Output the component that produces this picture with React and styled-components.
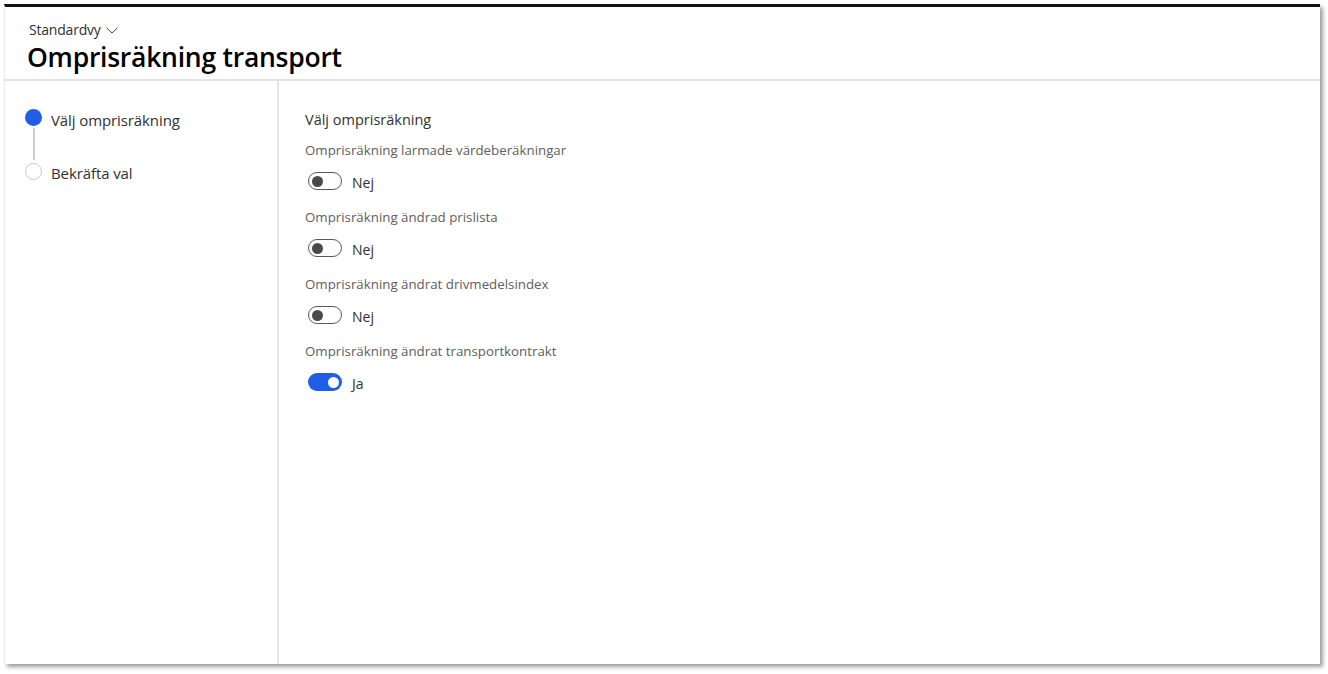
import React from 'react';
import styled, { createGlobalStyle } from 'styled-components';

const GlobalStyle = createGlobalStyle`
    html, body {
        margin: 0;
        padding: 0;
        background: #ffffff;
    }

    body {
        font-family: "Open Sans", "Noto Sans", sans-serif;
        color: #323130;
    }
`;

const Page = styled.div`
    width: 1328px;
    height: 674px;
    padding: 4px 0 0 4px;
    box-sizing: border-box;
`;

const Frame = styled.div`
    width: 1316px;
    height: 660px;
    box-sizing: border-box;
    display: flex;
    flex-direction: column;
    background: #ffffff;
    border-top: 3px solid #111111;
    border-left: 1px solid #ececec;
    box-shadow: 3px 3px 4px rgba(0, 0, 0, 0.38);
`;

const Header = styled.header`
    height: 74px;
    box-sizing: border-box;
    padding: 15px 0 0 22px;
    border-bottom: 2px solid #e3e3e3;
`;

const ViewPicker = styled.div`
    display: flex;
    align-items: center;
    gap: 5px;
    font-size: 14px;
    color: #323130;
    line-height: 16px;
    padding-left: 2px;
    letter-spacing: -0.2px;
`;

const Title = styled.h1`
    margin: 3px 0 0;
    font-size: 26.5px;
    font-weight: 600;
    line-height: 32px;
    color: #000000;
    letter-spacing: -0.25px;
`;

const Body = styled.div`
    flex: 1;
    display: flex;
`;

const Sidebar = styled.nav`
    width: 274px;
    border-right: 2px solid #e6e6e6;
    padding: 27px 0 0 20px;
    box-sizing: border-box;
`;

const Step = styled.div`
    display: flex;
    align-items: center;
    gap: 9px;
    height: 18px;
    font-size: 15px;
    color: #323130;
`;

const StepText = styled.span`
    padding-top: ${p => (p.$first ? '5px' : '3px')};
    letter-spacing: -0.1px;
`;

const Dot = styled.span`
    width: 17px;
    height: 17px;
    box-sizing: border-box;
    border-radius: 50%;
    background: ${p => (p.$active ? '#1f5ee5' : '#ffffff')};
    border: ${p => (p.$active ? 'none' : '1.5px solid #c8c8c8')};
    flex-shrink: 0;
`;

const Connector = styled.div`
    width: 2px;
    height: 32px;
    margin: 2px 0 2px 8px;
    background: #cfcfcf;
`;

const Main = styled.main`
    flex: 1;
    padding: 29px 0 0 26px;
`;

const SectionTitle = styled.h2`
    margin: 0 0 11px;
    font-size: 14.5px;
    font-weight: 400;
    line-height: 20px;
    color: #323130;
`;

const Field = styled.div`
    display: flex;
    flex-direction: column;
    margin-bottom: 15px;
`;

const Label = styled.label`
    font-size: 13.3px;
    line-height: 18px;
    color: #605e5c;
    margin-bottom: 10px;
`;

const ToggleRow = styled.div`
    display: flex;
    align-items: center;
    gap: 10px;
    padding-left: 3px;
    height: 24px;
`;

const Track = styled.span`
    width: 34px;
    height: 18px;
    box-sizing: border-box;
    border-radius: 9px;
    display: flex;
    align-items: center;
    padding: 0 3px;
    justify-content: ${p => (p.$on ? 'flex-end' : 'flex-start')};
    background: ${p => (p.$on ? '#1f5ee5' : '#ffffff')};
    border: ${p => (p.$on ? 'none' : '1.5px solid #5a5a5a')};
`;

const Knob = styled.span`
    width: 11px;
    height: 11px;
    border-radius: 50%;
    background: ${p => (p.$on ? '#ffffff' : '#4a4a4a')};
`;

const ToggleText = styled.span`
    font-size: 14px;
    color: #323130;
    padding-top: 3px;
`;

const fields = [
    { label: 'Omprisräkning larmade värdeberäkningar', on: false },
    { label: 'Omprisräkning ändrad prislista', on: false },
    { label: 'Omprisräkning ändrat drivmedelsindex', on: false },
    { label: 'Omprisräkning ändrat transportkontrakt', on: true },
];

const Chevron = () => (
    <svg width="12" height="7" viewBox="0 0 12 7" fill="none">
        <path d="M0.5 0.8 L6 6 L11.5 0.8" stroke="#444" strokeWidth="1" />
    </svg>
);

const App = () => {
    return (
        <Page>
            <GlobalStyle />
            <Frame>
                <Header>
                    <ViewPicker>
                        Standardvy <Chevron />
                    </ViewPicker>
                    <Title>Omprisräkning transport</Title>
                </Header>
                <Body>
                    <Sidebar>
                        <Step>
                            <Dot $active />
                            <StepText $first>Välj omprisräkning</StepText>
                        </Step>
                        <Connector />
                        <Step>
                            <Dot />
                            <StepText>Bekräfta val</StepText>
                        </Step>
                    </Sidebar>
                    <Main>
                        <SectionTitle>Välj omprisräkning</SectionTitle>
                        {fields.map(f => (
                            <Field key={f.label}>
                                <Label>{f.label}</Label>
                                <ToggleRow>
                                    <Track $on={f.on}>
                                        <Knob $on={f.on} />
                                    </Track>
                                    <ToggleText>{f.on ? 'Ja' : 'Nej'}</ToggleText>
                                </ToggleRow>
                            </Field>
                        ))}
                    </Main>
                </Body>
            </Frame>
        </Page>
    );
};

export default App;
